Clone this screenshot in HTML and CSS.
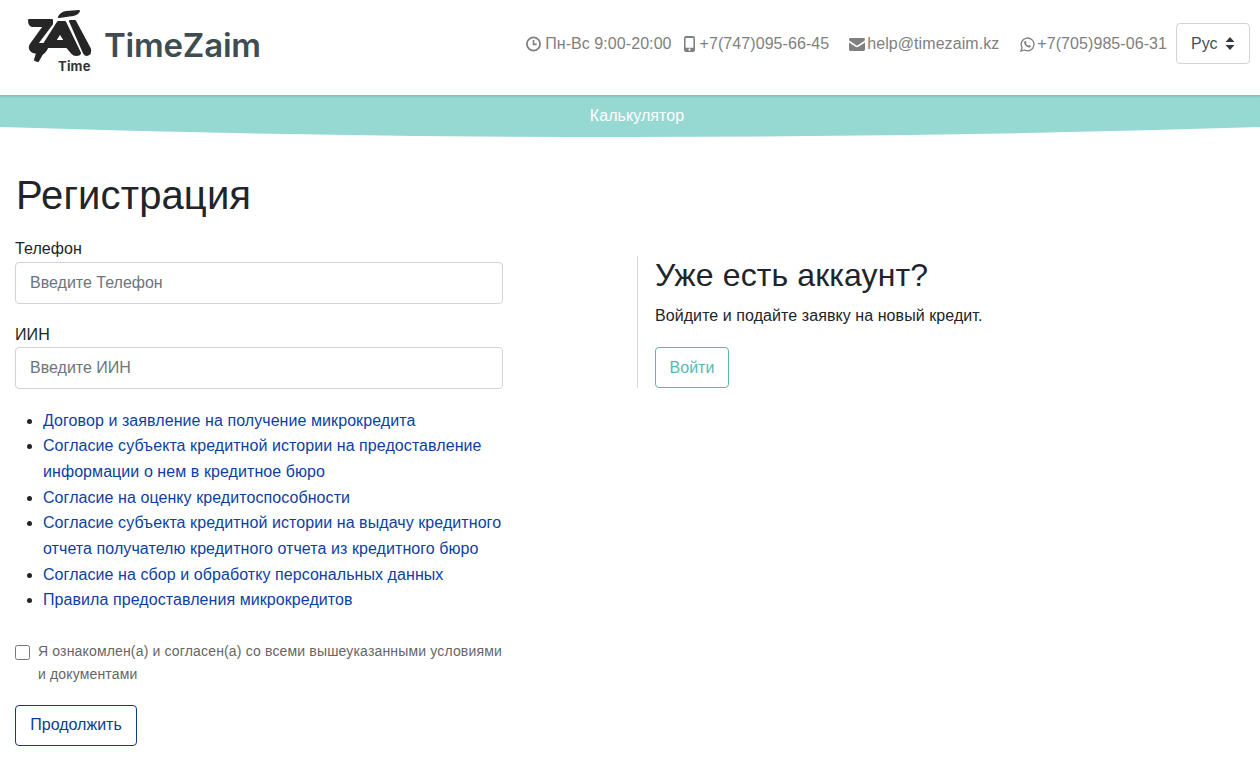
FILE: index.html
```html
<!DOCTYPE html>
<html lang="ru">
<head>
    <meta charset="UTF-8">
    <meta name="viewport" content="width=device-width, initial-scale=1.0">
    <title>TimeZaim - Регистрация</title>
    <link rel="stylesheet" href="styles.css">
</head>
<body>
    <header class="topbar">
        <a class="logo" href="#">
            <span class="logo-mark">
                <svg width="77" height="64" viewBox="27 9 77 64">
                    <path class="logo-dark" d="M29 20 L52 20 L52 24 L37 44 L49 44 L46 50 Q44 53 42 54 L38 61 L35 60 L37 53 L33 52 Q28 49 31 44 L44 26 L32 26 Q29 25 29 20 Z"/>
                    <path class="logo-dark" fill-rule="evenodd" d="M58 22 L65 22 L80 53 Q80 55 76 55 Q74 55 72 53 L67 47 L47 47 L44 44 Z M60 33 L55 41 L65 41 Z"/>
                    <path class="logo-dark" d="M70 21 L75 21 L90 49 Q91 54 87 55 Q85 55 84 53 Z"/>
                    <path class="logo-dark" d="M59 17 Q61 13 66 12 L79 11 Q78 14 73 15 Z"/>
                </svg>
                <span class="logo-time">Time</span>
            </span>
            <span class="logo-name">TimeZaim</span>
        </a>
        <div class="contacts">
            <span class="contact contact-hours">
                <svg class="ico" width="15" height="16" viewBox="0 0 15 16"><circle cx="7.5" cy="8" r="6.6" fill="none" stroke="#808080" stroke-width="1.8"/><path d="M7.5 4v4.400h3.200" fill="none" stroke="#808080" stroke-width="1.6"/></svg>
                Пн-Вс 9:00-20:00
            </span>
            <span class="contact contact-phone">
                <svg class="ico" width="11" height="16" viewBox="0 0 11 16"><path fill="#808080" fill-rule="evenodd" d="M2 0h7a2 2 0 0 1 2 2v12a2 2 0 0 1-2 2H2a2 2 0 0 1-2-2V2a2 2 0 0 1 2-2zM1.600 2v9.800h7.800V2zM5.500 12.600a1.100 1.100 0 1 0 0 2.200 1.100 1.100 0 0 0 0-2.200z"/></svg>
                +7(747)095-66-45
            </span>
            <span class="contact contact-mail">
                <svg class="ico" width="16" height="13" viewBox="0 0 16 13"><path fill="#808080" d="M1.400 0h13.200C15.400 0 16 .6 16 1.400c0 .6-.4 1.200-.9 1.600L8.800 7.200c-.5.3-1.100.3-1.600 0L.9 3C.4 2.600 0 2 0 1.400 0 .6.6 0 1.400 0zM0 4.400l6.600 4.300c.9.600 1.900.600 2.800 0L16 4.400v7.200c0 .8-.6 1.400-1.400 1.400H1.400C.6 13 0 12.400 0 11.600z"/></svg>
                help@timezaim.kz
            </span>
            <span class="contact contact-whatsapp">
                <svg class="ico" width="15" height="15" viewBox="0 0 15 15"><path fill="none" stroke="#808080" stroke-width="1.300" d="M1 14l1-3.500A6.400 6.400 0 1 1 4.500 13z"/><path fill="#808080" d="M5.200 3.900c.4 0 .6 0 .7.400l.5 1.200c.1.300 0 .5-.5 1.100.5 1 1.300 1.700 2.400 2.200.5-.6.700-.8 1-.7l1.300.6c.3.200.3.400.2.800-.2.800-1 1.200-1.800 1.100-2.300-.4-4.200-2.300-4.800-4.400-.2-1 .2-2.100 1-2.300z"/></svg>
                +7(705)985-06-31
            </span>
            <button class="lang" type="button">
                Рус
                <svg width="10" height="13" viewBox="0 0 10 13"><path fill="#343a40" d="M5 0l4.500 5H.5zM5 13L.5 8h9z"/></svg>
            </button>
        </div>
    </header>

    <nav class="band">
        <div class="band-links"><a href="#">Калькулятор</a></div>
        <svg class="band-curve" viewBox="0 0 1260 10" preserveAspectRatio="none"><path d="M0 0Q630 20 1260 0Z"/></svg>
    </nav>

    <main class="page">
        <h1>Регистрация</h1>
        <div class="columns">
            <form class="reg-form">
                <div class="form-group">
                    <label for="phone">Телефон</label>
                    <input id="phone" class="form-control" type="text" placeholder="Введите Телефон">
                </div>
                <div class="form-group">
                    <label for="iin">ИИН</label>
                    <input id="iin" class="form-control" type="text" placeholder="Введите ИИН">
                </div>
                <ul class="docs">
                    <li><a href="#">Договор и заявление на получение микрокредита</a></li>
                    <li><a href="#">Согласие субъекта кредитной истории на предоставление информации о нем в кредитное бюро</a></li>
                    <li><a href="#">Согласие на оценку кредитоспособности</a></li>
                    <li><a href="#">Согласие субъекта кредитной истории на выдачу кредитного отчета получателю кредитного отчета из кредитного бюро</a></li>
                    <li><a href="#">Согласие на сбор и обработку персональных данных</a></li>
                    <li><a href="#">Правила предоставления микрокредитов</a></li>
                </ul>
                <label class="agree">
                    <input type="checkbox">
                    <span>Я ознакомлен(а) и согласен(а) со всеми вышеуказанными условиями и документами</span>
                </label>
                <button class="btn btn-next" type="button">Продолжить</button>
            </form>
            <aside class="login-box">
                <h2>Уже есть аккаунт?</h2>
                <p>Войдите и подайте заявку на новый кредит.</p>
                <button class="btn btn-login" type="button">Войти</button>
            </aside>
        </div>
    </main>
</body>
</html>
```

FILE: styles.css
```css
* {
    box-sizing: border-box;
}

body {
    margin: 0;
    font-family: "Liberation Sans", Arial, sans-serif;
    font-size: 16px;
    line-height: 1.6;
    letter-spacing: .07px;
    color: #212529;
    background: #fff;
    overflow: hidden;
}

a {
    text-decoration: none;
}

/* header */
.topbar {
    height: 95px;
    display: flex;
    justify-content: space-between;
    align-items: center;
    padding: 0 10px 7px 27px;
}

.logo {
    display: flex;
    align-items: center;
    margin-bottom: 6px;
}

.logo-mark {
    display: block;
    position: relative;
    width: 77px;
    height: 64px;
}

.logo-mark svg {
    display: block;
}

.logo-dark {
    fill: #262626;
    stroke: #262626;
    stroke-width: 2;
    stroke-linejoin: round;
}

.logo-time {
    position: absolute;
    left: 31px;
    top: 50px;
    font-family: "Inter", sans-serif;
    font-size: 13px;
    font-weight: 700;
    line-height: 14px;
    letter-spacing: .2px;
    color: #333;
}

.logo-name {
    margin-top: 8px;
    font-family: "Inter", sans-serif;
    font-size: 33px;
    font-weight: 600;
    line-height: 40px;
    letter-spacing: -.2px;
    color: #3f4c50;
}

.contacts {
    display: flex;
    align-items: center;
    color: #808080;
    line-height: 24px;
}

.contact {
    display: flex;
    align-items: center;
    gap: 3px;
    white-space: nowrap;
}

.contact-hours {
    margin-right: 12px;
    gap: 4px;
}

.contact-phone {
    margin-right: 20px;
}

.contact-mail {
    margin-right: 21px;
    gap: 2px;
}

.contact-whatsapp {
    margin-right: 9px;
    gap: 2px;
}

.contact-phone .ico {
    margin-right: 2px;
}

.lang {
    width: 74px;
    height: 41px;
    margin-top: -1px;
    display: flex;
    align-items: center;
    justify-content: space-between;
    padding: 0 14px;
    font: inherit;
    color: #495057;
    background: #fff;
    border: 1px solid #ced4da;
    border-radius: 4px;
}

/* teal strip under the header */
.band-links {
    height: 32px;
    padding: 7px 0 0 14px;
    text-align: center;
    line-height: 27px;
    background: #96d9d3;
    box-shadow: inset 0 3px 3px -2px rgba(0, 0, 0, .18);
}

.band-links a {
    color: #fff;
}

.band-curve {
    display: block;
    width: 100%;
    height: 10px;
    fill: #96d9d3;
}

/* content */
.page {
    padding: 34px 15px 0;
}

h1 {
    margin: 0 0 17px;
    font-size: 40px;
    font-weight: 400;
    line-height: 48px;
    letter-spacing: .12px;
    padding-left: 1px;
}

.columns {
    display: flex;
    align-items: flex-start;
}

.reg-form {
    width: 488px;
}

.form-group {
    margin-bottom: 18.2px;
}

.form-group label {
    display: block;
}

.form-control {
    display: block;
    width: 100%;
    height: 42px;
    padding: 0 14px;
    font: inherit;
    color: #495057;
    border: 1px solid #ced4da;
    border-radius: 4px;
}

.form-control::placeholder {
    color: #6c757d;
    opacity: 1;
}

.docs {
    margin: 0 0 26.8px;
    padding-left: 28px;
    line-height: 25.7px;
}

.docs a {
    color: #0d3fa3;
}

.agree {
    display: flex;
    align-items: flex-start;
    gap: 8px;
    font-size: 14px;
    line-height: 23px;
    letter-spacing: .16px;
    color: #666;
}

.agree input {
    flex: none;
    width: 15px;
    height: 15px;
    margin: 5px 0 0;
}

.btn {
    display: block;
    height: 41px;
    padding: 0;
    font: inherit;
    background: #fff;
    border-radius: 4px;
}

.btn-next {
    width: 122px;
    margin-top: 19px;
    padding-bottom: 2px;
    color: #0d3c8c;
    border: 1px solid #0d3c8c;
}

.login-box {
    margin: 20px 0 0 134px;
    padding-left: 17px;
    height: 132px;
    border-left: 1px solid #d9d9d9;
}

h2 {
    margin: 0 0 9px;
    font-size: 32px;
    font-weight: 400;
    line-height: 38px;
    letter-spacing: .1px;
}

.login-box p {
    margin: 0 0 18px;
}

.btn-login {
    width: 74px;
    padding-top: 2px;
    color: #5cb8ae;
    border: 1px solid #5cb8ae;
}
```
